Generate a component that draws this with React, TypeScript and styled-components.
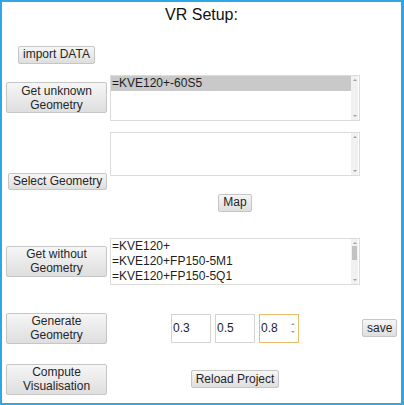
import React from "react";
import styled, { createGlobalStyle } from "styled-components";

const Global = createGlobalStyle`
  html, body { margin: 0; padding: 0; background: #fff; }
  * { box-sizing: border-box; }
`;

const Frame = styled.div`
  width: 404px;
  height: 405px;
  border-style: solid;
  border-color: #2fa6e6;
  border-width: 2px 3px 2px 2px;
  background: #fff;
  font-family: "Liberation Sans", Arial, sans-serif;
  color: #222;
  display: flex;
  flex-direction: column;
  overflow: hidden;
`;

const Title = styled.h1`
  margin: 4px 0 0 0;
  font-size: 16px;
  line-height: 18px;
  font-weight: normal;
  text-align: center;
  color: #111;
`;

const Row = styled.div<{ $top: number; $align?: string; $pad?: number }>`
  display: flex;
  align-items: ${(p) => p.$align || "center"};
  margin-top: ${(p) => p.$top}px;
  padding-left: ${(p) => (p.$pad ?? 4)}px;
`;

const LeftCell = styled.div<{ $offset?: number; $top?: number }>`
  width: 104px;
  flex: none;
  display: flex;
  padding-left: ${(p) => p.$offset || 0}px;
  margin-top: ${(p) => p.$top || 0}px;
`;

const MidCell = styled.div`
  width: 250px;
  flex: none;
  display: flex;
  justify-content: center;
  align-items: center;
  gap: 4px;
`;

const Button = styled.button`
  font-family: "Liberation Sans", Arial, sans-serif;
  font-size: 12px;
  line-height: 15px;
  color: #262626;
  padding: 0 4px;
  height: 17.5px;
  border: 1px solid #c6c6c6;
  border-radius: 2px;
  background: linear-gradient(#f6f6f6, #dedede);
  white-space: nowrap;
  flex: none;
`;

const BigButton = styled(Button)`
  width: 101px;
  height: 31px;
  line-height: 14px;
  white-space: normal;
  padding: 0 2px;
`;

const ListBox = styled.div<{ $h: number }>`
  width: 250px;
  height: ${(p) => p.$h}px;
  border: 1px solid #dcdcdc;
  display: flex;
  flex: none;
  background: #fff;
`;

const Items = styled.div`
  flex: 1;
  overflow: hidden;
`;

const Item = styled.div<{ $selected?: boolean }>`
  font-size: 12px;
  line-height: 15px;
  height: 15px;
  padding-left: 1px;
  color: #1e1e1e;
  background: ${(p) => (p.$selected ? "#c9c9c9" : "transparent")};
  white-space: nowrap;
`;

const Track = styled.div`
  width: 7px;
  margin-right: 1px;
  background: #f1f1f1;
  display: flex;
  flex-direction: column;
  align-items: center;
  justify-content: space-between;
  padding: 3px 0;
`;

const Arrow = styled.div<{ $down?: boolean }>`
  width: 0;
  height: 0;
  border-left: 2px solid transparent;
  border-right: 2px solid transparent;
  ${(p) =>
    p.$down
      ? "border-top: 2px solid #a0a0a0;"
      : "border-bottom: 2px solid #a0a0a0;"}
`;

const Thumb = styled.div`
  width: 5px;
  height: 14px;
  background: #c2c2c2;
  margin-bottom: auto;
  margin-top: 2px;
`;

const Track2 = styled(Track)`
  justify-content: flex-start;
`;

const NumberBox = styled.div<{ $focus?: boolean }>`
  width: 40px;
  height: 29px;
  border: 1px solid ${(p) => (p.$focus ? "#ebbd6a" : "#d4d4d4")};
  font-size: 12px;
  line-height: 27px;
  padding-left: 1px;
  color: #1e1e1e;
  display: flex;
  justify-content: space-between;
  background: #fff;
`;

const Spin = styled.div`
  width: 7px;
  display: flex;
  flex-direction: column;
  justify-content: center;
  align-items: center;
  gap: 6px;
  margin-right: 2px;
`;

const SaveButton = styled(Button)`
  margin-left: 2px;
`;

function List({ h, items, selected, thumb }: { h: number; items: string[]; selected?: number; thumb?: boolean }) {
  return (
    <ListBox $h={h}>
      <Items>
        {items.map((t, i) => (
          <Item key={i} $selected={i === selected}>
            {t}
          </Item>
        ))}
      </Items>
      {thumb ? (
        <Track2>
          <Arrow />
          <Thumb />
          <Arrow $down />
        </Track2>
      ) : (
        <Track>
          <Arrow />
          <Arrow $down />
        </Track>
      )}
    </ListBox>
  );
}

export default function App() {
  return (
    <>
      <Global />
      <Frame>
        <Title>VR Setup:</Title>
        <Row $top={22} $pad={16}>
          <Button>import DATA</Button>
        </Row>
        <Row $top={11}>
          <LeftCell>
            <BigButton>Get unknown Geometry</BigButton>
          </LeftCell>
          <List h={46} items={["=KVE120+-60S5"]} selected={0} />
        </Row>
        <Row $top={11} $align="flex-start">
          <LeftCell $offset={2} $top={41}>
            <Button>Select Geometry</Button>
          </LeftCell>
          <List h={44} items={[]} />
        </Row>
        <Row $top={4} $pad={108}>
          <MidCell>
            <Button>Map</Button>
          </MidCell>
        </Row>
        <Row $top={26}>
          <LeftCell>
            <BigButton>Get without Geometry</BigButton>
          </LeftCell>
          <List h={47} items={["=KVE120+", "=KVE120+FP150-5M1", "=KVE120+FP150-5Q1"]} thumb />
        </Row>
        <Row $top={28}>
          <LeftCell>
            <BigButton>Generate Geometry</BigButton>
          </LeftCell>
          <MidCell>
            <NumberBox>0.3</NumberBox>
            <NumberBox>0.5</NumberBox>
            <NumberBox $focus>
              0.8
              <Spin>
                <Arrow />
                <Arrow $down />
              </Spin>
            </NumberBox>
          </MidCell>
          <SaveButton>save</SaveButton>
        </Row>
        <Row $top={20}>
          <LeftCell>
            <BigButton>Compute Visualisation</BigButton>
          </LeftCell>
          <MidCell>
            <Button>Reload Project</Button>
          </MidCell>
        </Row>
      </Frame>
    </>
  );
}
